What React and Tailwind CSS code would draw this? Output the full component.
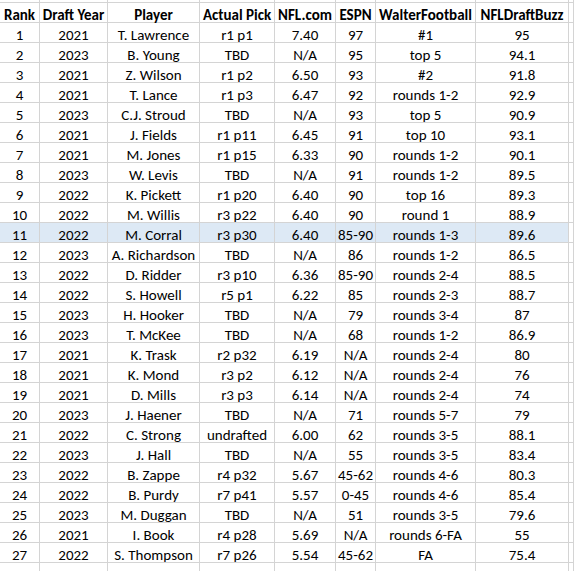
import React from 'react';

const headers = ['Rank', 'Draft Year', 'Player', 'Actual Pick', 'NFL.com', 'ESPN', 'WalterFootball', 'NFLDraftBuzz'];

const rows = [
  ['1', '2021', 'T. Lawrence', 'r1 p1', '7.40', '97', '#1', '95'],
  ['2', '2023', 'B. Young', 'TBD', 'N/A', '95', 'top 5', '94.1'],
  ['3', '2021', 'Z. Wilson', 'r1 p2', '6.50', '93', '#2', '91.8'],
  ['4', '2021', 'T. Lance', 'r1 p3', '6.47', '92', 'rounds 1-2', '92.9'],
  ['5', '2023', 'C.J. Stroud', 'TBD', 'N/A', '93', 'top 5', '90.9'],
  ['6', '2021', 'J. Fields', 'r1 p11', '6.45', '91', 'top 10', '93.1'],
  ['7', '2021', 'M. Jones', 'r1 p15', '6.33', '90', 'rounds 1-2', '90.1'],
  ['8', '2023', 'W. Levis', 'TBD', 'N/A', '91', 'rounds 1-2', '89.5'],
  ['9', '2022', 'K. Pickett', 'r1 p20', '6.40', '90', 'top 16', '89.3'],
  ['10', '2022', 'M. Willis', 'r3 p22', '6.40', '90', 'round 1', '88.9'],
  ['11', '2022', 'M. Corral', 'r3 p30', '6.40', '85-90', 'rounds 1-3', '89.6'],
  ['12', '2023', 'A. Richardson', 'TBD', 'N/A', '86', 'rounds 1-2', '86.5'],
  ['13', '2022', 'D. Ridder', 'r3 p10', '6.36', '85-90', 'rounds 2-4', '88.5'],
  ['14', '2022', 'S. Howell', 'r5 p1', '6.22', '85', 'rounds 2-3', '88.7'],
  ['15', '2023', 'H. Hooker', 'TBD', 'N/A', '79', 'rounds 3-4', '87'],
  ['16', '2023', 'T. McKee', 'TBD', 'N/A', '68', 'rounds 1-2', '86.9'],
  ['17', '2021', 'K. Trask', 'r2 p32', '6.19', 'N/A', 'rounds 2-4', '80'],
  ['18', '2021', 'K. Mond', 'r3 p2', '6.12', 'N/A', 'rounds 2-4', '76'],
  ['19', '2021', 'D. Mills', 'r3 p3', '6.14', 'N/A', 'rounds 2-4', '74'],
  ['20', '2023', 'J. Haener', 'TBD', 'N/A', '71', 'rounds 5-7', '79'],
  ['21', '2022', 'C. Strong', 'undrafted', '6.00', '62', 'rounds 3-5', '88.1'],
  ['22', '2023', 'J. Hall', 'TBD', 'N/A', '55', 'rounds 3-5', '83.4'],
  ['23', '2022', 'B. Zappe', 'r4 p32', '5.67', '45-62', 'rounds 4-6', '80.3'],
  ['24', '2022', 'B. Purdy', 'r7 p41', '5.57', '0-45', 'rounds 4-6', '85.4'],
  ['25', '2023', 'M. Duggan', 'TBD', 'N/A', '51', 'rounds 3-5', '79.6'],
  ['26', '2021', 'I. Book', 'r4 p28', '5.69', 'N/A', 'rounds 6-FA', '55'],
  ['27', '2022', 'S. Thompson', 'r7 p26', '5.54', '45-62', 'FA', '75.4'],
];

// spreadsheet cell: right + bottom gridline, text sits low like Excel
const Cell = ({ children, bold, selected }) => (
  <div
    className={`h-[20px] pt-[6px] border-r border-b border-[#d4d4d4] flex items-center justify-center whitespace-nowrap ${
      bold ? 'font-bold' : ''
    } ${selected ? 'bg-[#dde9f5]' : ''}`}
  >
    {children}
  </div>
);

export default function App() {
  return (
    <div className="w-[574px] h-[571px] overflow-hidden bg-white text-black text-[15px] leading-[15px] font-['Carlito','Lato','Liberation_Sans',sans-serif]">
      <div className="grid grid-cols-[40px_68px_92px_75px_61px_40px_100px_93px_5px]">
        {Array.from({ length: 9 }).map((_, i) => (
          <div key={i} className="h-[3px] border-r border-b border-[#d4d4d4]" />
        ))}

        {headers.map((h) => (
          <Cell key={h} bold>{h}</Cell>
        ))}
        <Cell />

        {rows.map((r) => {
          const sel = r[0] === '11';
          return (
            <React.Fragment key={r[0]}>
              {r.map((v, i) => (
                <Cell key={i} selected={sel}>{v}</Cell>
              ))}
              <Cell />
            </React.Fragment>
          );
        })}

        {Array.from({ length: 9 }).map((_, i) => (
          <div key={i} className="h-[8px] border-r border-[#d4d4d4]" />
        ))}
      </div>
    </div>
  );
}
